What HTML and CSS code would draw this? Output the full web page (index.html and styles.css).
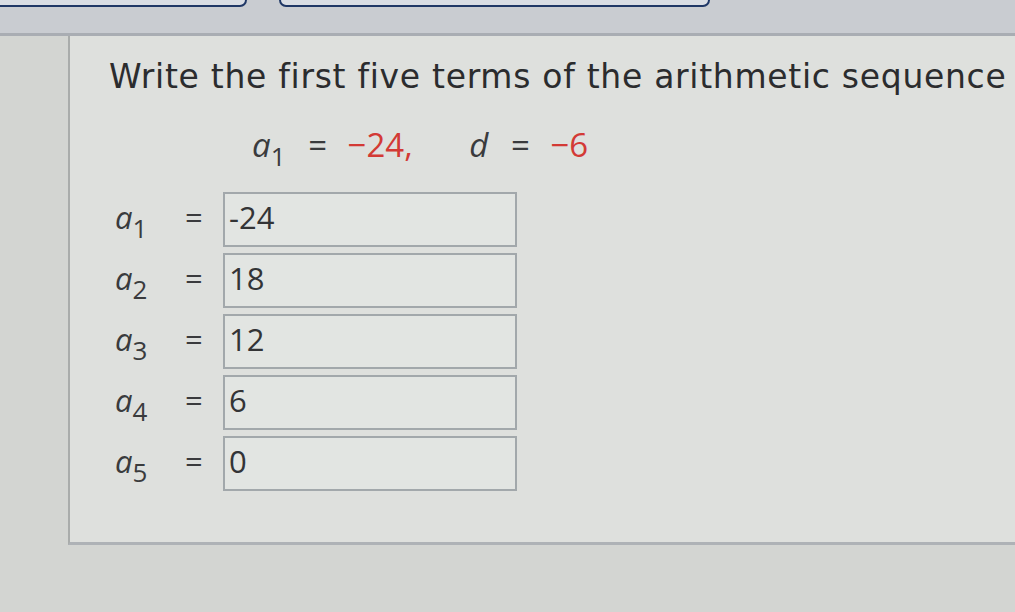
FILE: index.html
```html
<!DOCTYPE html>
<html>
<head>
<meta charset="UTF-8">
<title>Arithmetic sequence</title>
<link rel="stylesheet" href="styles.css">
</head>
<body>

<div id="topbar">
	<div class="tab tab-first"></div>
	<div class="tab tab-second"></div>
</div><!-- topbar -->

<div id="question">
	<p class="prompt">Write the first five terms of the arithmetic sequence g</p>

	<div class="given">
		<span class="var">a</span><sub>1</sub>
		<span class="op">=</span>
		<span class="num">&minus;24,</span>
		<span class="var d">d</span>
		<span class="op">=</span>
		<span class="num">&minus;6</span>
	</div>

	<div class="answers">
		<div class="row">
			<span class="label"><span class="var">a</span><sub>1</sub></span>
			<span class="eq">=</span>
			<span class="box">-24</span>
		</div>
		<div class="row">
			<span class="label"><span class="var">a</span><sub>2</sub></span>
			<span class="eq">=</span>
			<span class="box">18</span>
		</div>
		<div class="row">
			<span class="label"><span class="var">a</span><sub>3</sub></span>
			<span class="eq">=</span>
			<span class="box">12</span>
		</div>
		<div class="row">
			<span class="label"><span class="var">a</span><sub>4</sub></span>
			<span class="eq">=</span>
			<span class="box">6</span>
		</div>
		<div class="row">
			<span class="label"><span class="var">a</span><sub>5</sub></span>
			<span class="eq">=</span>
			<span class="box">0</span>
		</div>
	</div><!-- answers -->
</div><!-- question -->

</body>
</html>
```

FILE: styles.css
```css
body {
	margin: 0;
	background: #d3d5d2;
	font-family: "DejaVu Sans", "Open Sans", sans-serif;
	color: #2b2c2e;
	overflow: hidden;
}

#topbar {
	height: 33px;
	background: #c9ccd1;
	border-bottom: 3px solid #a9adb3;
	position: relative;
}

.tab {
	position: absolute;
	top: -12px;
	height: 15px;
	background: #d9dde4;
	border: 2px solid #1f3766;
	border-radius: 0 0 7px 7px;
}

.tab-first {
	left: -10px;
	width: 253px;
}

.tab-second {
	left: 279px;
	width: 427px;
}

#question {
	margin-left: 68px;
	height: 506px;
	background: #dee0dd;
	border-left: 2px solid #a9acab;
	border-bottom: 3px solid #aeb2b6;
	padding-left: 39px;
}

/* the prompt runs past the panel edge, as the page clips it */
.prompt {
	margin: 0;
	padding-top: 19px;
	font-size: 33px;
	line-height: 44px;
	white-space: nowrap;
	letter-spacing: 0.7px;
}

.given {
	margin-top: 24px;
	padding-left: 143px;
	font-family: "Open Sans", "DejaVu Sans", sans-serif;
	font-size: 33px;
	line-height: 44px;
	color: #3a3b3d;
}

.var {
	font-style: italic;
}

sub {
	font-size: 26px;
	vertical-align: -9px;
	line-height: 0;
}

.op {
	margin: 0 12px 0 14px;
}

.num {
	color: #d33a35;
}

.d {
	margin-left: 48px;
}

.answers {
	margin-top: 25px;
	display: flex;
	flex-direction: column;
	gap: 6px;
	font-family: "Open Sans", "DejaVu Sans", sans-serif;
}

.row {
	display: flex;
	align-items: center;
	font-size: 31px;
	color: #3a3b3d;
}

.label {
	width: 70px;
	padding-left: 6px;
	margin-top: -6px;
}

.eq {
	width: 38px;
	margin-top: -6px;
}

.box {
	width: 286px;
	height: 51px;
	border: 2px solid #a2a8ab;
	background: #e2e5e2;
	padding-left: 4px;
	line-height: 46px;
	color: #333436;
}
```
